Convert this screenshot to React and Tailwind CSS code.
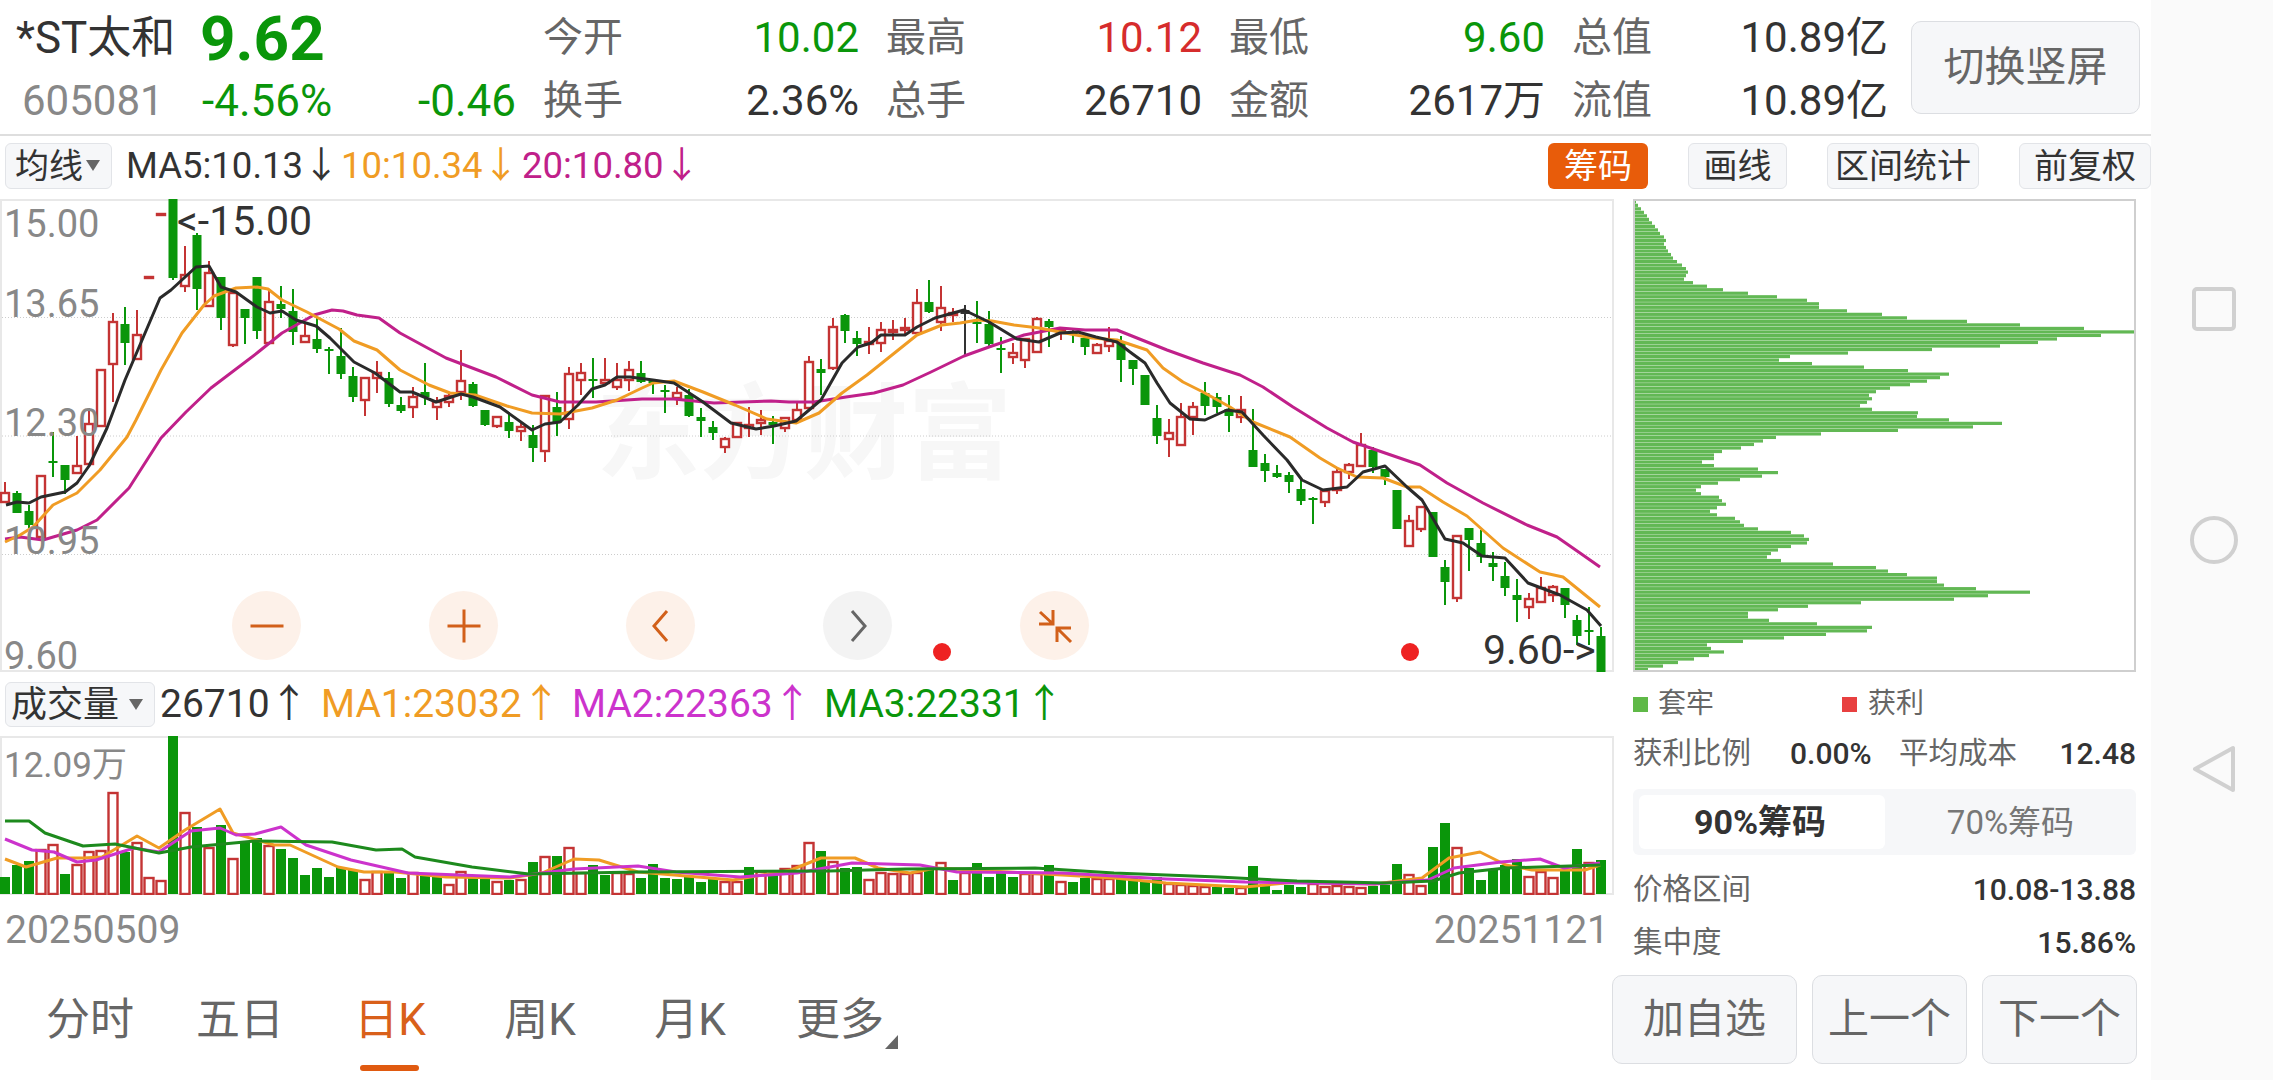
import React from 'react';

// [wick top, body top, body bottom, wick bottom, colour], 12px per candle, page y coords
const CANDLES = [
  [482,493,502,502,'r'],[491,493,513,513,'g'],[505,511,525,528,'g'],[476,476,537,537,'r'],[432,461,463,477,'g'],
  [465,465,480,494,'g'],[436,466,473,473,'r'],[408,424,464,464,'r'],[370,370,426,426,'r'],[313,322,364,402,'r'],
  [307,324,343,365,'g'],[310,335,359,359,'r'],[277,277,278,278,'r'],[214,214,215,215,'r'],[199,199,278,280,'g'],
  [246,275,286,292,'r'],[233,235,289,310,'g'],[261,273,306,306,'r'],[277,277,318,330,'g'],[290,293,345,347,'r'],
  [309,309,318,344,'g'],[277,277,331,339,'g'],[290,302,343,343,'r'],[286,304,309,318,'g'],[289,311,332,345,'g'],
  [323,336,342,342,'r'],[317,339,349,353,'g'],[347,349,350,374,'g'],[328,356,374,379,'g'],[367,376,397,402,'g'],
  [378,378,400,416,'r'],[361,373,378,393,'r'],[372,378,404,407,'g'],[397,405,411,413,'g'],[387,397,407,418,'r'],
  [363,392,397,405,'g'],[397,402,407,420,'r'],[393,396,402,407,'r'],[350,381,392,400,'r'],[382,384,406,407,'g'],
  [410,410,425,426,'g'],[417,417,426,428,'r'],[412,422,431,438,'g'],[423,427,431,441,'r'],[425,435,448,462,'g'],
  [396,396,451,462,'r'],[392,407,423,436,'g'],[367,374,419,429,'r'],[363,373,380,395,'r'],[358,379,380,398,'g'],
  [358,380,383,385,'r'],[363,380,387,390,'r'],[361,370,380,391,'r'],[361,373,382,383,'g'],[379,381,383,394,'g'],
  [385,390,392,413,'g'],[387,393,398,405,'r'],[389,395,416,417,'g'],[408,417,421,437,'g'],[421,427,433,440,'g'],
  [437,439,447,453,'r'],[422,423,437,437,'r'],[407,425,428,437,'r'],[410,420,423,435,'r'],[416,422,425,444,'g'],
  [418,418,428,432,'r'],[403,410,420,420,'r'],[356,362,408,408,'r'],[359,369,373,395,'g'],[318,327,368,370,'r'],
  [314,315,331,343,'g'],[331,338,344,356,'g'],[327,342,344,354,'r'],[322,330,343,352,'r'],[320,330,332,340,'r'],
  [318,328,330,336,'r'],[289,303,333,333,'r'],[280,302,312,313,'g'],[286,308,322,331,'r'],[308,313,315,322,'r'],
  [305,310,314,356,'k'],[301,322,324,343,'g'],[311,324,344,347,'g'],[337,348,350,373,'g'],[343,353,357,364,'r'],
  [338,339,360,368,'r'],[317,319,352,352,'r'],[319,321,327,347,'g'],[328,330,333,340,'r'],[330,332,334,343,'g'],
  [333,338,347,355,'g'],[343,345,353,354,'r'],[327,341,346,352,'r'],[336,342,360,382,'g'],[360,360,369,385,'g'],
  [375,375,405,405,'g'],[405,418,436,444,'g'],[419,433,439,457,'r'],[403,417,445,445,'r'],[402,407,417,435,'r'],
  [382,393,406,415,'g'],[393,397,407,413,'g'],[395,409,416,432,'g'],[396,410,417,423,'r'],[409,450,467,467,'g'],
  [454,463,471,482,'g'],[465,473,477,478,'g'],[472,475,482,493,'g'],[480,489,501,505,'g'],[497,498,500,524,'g'],
  [490,491,502,507,'r'],[467,472,490,494,'r'],[463,465,472,479,'r'],[433,445,466,466,'r'],[447,450,467,473,'g'],
  [469,469,477,485,'g'],[490,490,529,529,'g'],[515,521,546,546,'r'],[507,507,529,532,'r'],[512,512,557,557,'g'],
  [560,567,582,605,'g'],[536,536,598,602,'r'],[528,528,540,571,'g'],[530,543,557,563,'g'],[552,563,567,581,'g'],
  [562,576,588,596,'g'],[579,595,600,622,'g'],[593,599,607,619,'r'],[577,588,602,602,'r'],[585,587,595,602,'r'],
  [588,588,605,618,'g'],[615,620,636,645,'g'],[607,630,632,645,'g'],[627,636,672,672,'g'],
];

const MA5 = '6,505 17,502 29,503 41,497 65,492 77,483 89,466 100,443 107,428 125,380 160,298 171,290 196,267 209,266 221,287 236,292 257,307 270,313 282,311 296,320 316,326 330,338 354,362 375,373 400,392 412,392 436,402 461,394 473,397 500,407 532,430 545,424 560,422 578,405 592,389 605,385 617,377 630,377 653,380 674,383 703,402 731,423 756,429 774,426 796,421 821,400 842,363 858,347 871,343 881,335 905,335 917,327 935,318 964,310 989,322 1017,339 1039,342 1060,333 1078,332 1096,337 1117,342 1130,352 1145,363 1157,383 1170,403 1190,419 1205,420 1227,410 1242,412 1263,435 1287,460 1302,480 1323,490 1347,487 1363,472 1385,466 1407,487 1422,500 1445,539 1463,543 1482,556 1505,558 1528,583 1560,595 1587,610 1601,626';
const MA10 = '5,542 20,535 33,527 53,505 77,493 100,470 127,437 136,420 161,370 182,333 204,305 214,296 236,288 257,287 268,289 282,300 307,312 339,329 354,341 377,350 400,370 429,385 450,393 475,395 507,406 532,413 560,414 592,408 617,400 642,388 653,383 674,381 703,392 735,405 767,419 796,423 819,413 842,393 867,375 892,355 917,335 942,325 960,323 978,320 992,321 1014,325 1039,328 1060,332 1092,338 1117,340 1147,350 1163,368 1183,382 1203,392 1230,407 1253,422 1290,437 1320,458 1337,468 1357,477 1383,478 1407,487 1420,487 1443,502 1467,516 1503,548 1540,572 1563,577 1600,607';
const MA20 = '5,539 20,537 43,540 77,530 97,520 129,488 161,438 186,412 211,388 257,353 282,333 314,315 332,310 343,311 357,315 379,318 400,333 446,358 496,377 532,395 560,402 596,402 642,399 674,399 714,403 771,401 789,402 814,402 846,397 874,393 903,385 931,372 964,356 989,347 1024,335 1060,328 1085,330 1117,330 1167,350 1203,363 1240,375 1263,387 1293,407 1327,428 1353,442 1420,465 1447,483 1483,503 1527,525 1557,537 1580,553 1600,567';

// bar heights, then whether the bar is an up day
const VOLUME = [
  [17,'g'],[29,'g'],[33,'g'],[44,'r'],[49,'r'],[20,'g'],[29,'r'],[42,'r'],[43,'r'],[101,'r'],[42,'g'],[51,'r'],[16,'r'],[13,'r'],
  [158,'g'],[81,'r'],[67,'g'],[46,'r'],[69,'g'],[35,'r'],[52,'g'],[56,'g'],[48,'r'],[45,'g'],[36,'g'],[19,'g'],[26,'g'],[17,'g'],
  [27,'g'],[24,'g'],[14,'r'],[22,'r'],[22,'g'],[16,'g'],[21,'r'],[19,'g'],[17,'g'],[9,'r'],[22,'r'],[16,'g'],[15,'g'],[12,'r'],
  [14,'g'],[14,'r'],[32,'g'],[37,'r'],[38,'g'],[46,'r'],[21,'r'],[29,'g'],[19,'g'],[21,'r'],[20,'r'],[16,'g'],[30,'g'],[16,'g'],
  [15,'g'],[17,'g'],[12,'g'],[16,'g'],[12,'r'],[12,'r'],[27,'g'],[22,'r'],[19,'g'],[25,'r'],[28,'r'],[51,'r'],[43,'g'],[32,'r'],
  [26,'g'],[27,'g'],[14,'r'],[21,'r'],[20,'r'],[20,'r'],[21,'r'],[24,'g'],[31,'r'],[14,'g'],[21,'r'],[31,'g'],[17,'g'],[21,'g'],
  [17,'g'],[20,'r'],[20,'r'],[29,'g'],[12,'r'],[12,'g'],[16,'g'],[15,'r'],[15,'r'],[16,'g'],[17,'g'],[13,'g'],[17,'g'],[10,'r'],
  [9,'r'],[8,'r'],[7,'r'],[7,'g'],[6,'g'],[6,'r'],[28,'g'],[10,'g'],[4,'g'],[9,'g'],[7,'g'],[10,'r'],[7,'r'],[8,'r'],[7,'r'],
  [6,'r'],[8,'g'],[9,'g'],[30,'g'],[19,'r'],[8,'r'],[47,'g'],[71,'g'],[46,'r'],[26,'g'],[14,'g'],[25,'g'],[29,'g'],[35,'g'],
  [17,'r'],[22,'r'],[16,'r'],[24,'g'],[45,'g'],[31,'r'],[34,'g'],
];

const VOL_MA1 = '5,859 26,867 57,858 83,858 102,857 137,836 159,848 185,830 220,809 233,833 274,845 290,845 338,867 364,872 395,872 446,877 510,878 542,873 574,859 599,860 638,872 686,876 733,880 791,870 821,858 855,858 878,868 910,873 936,868 1009,872 1062,875 1114,878 1166,883 1245,887 1297,882 1375,884 1422,878 1449,858 1480,852 1506,865 1532,870 1585,870 1600,865';
const VOL_MA2 = '5,839 32,850 54,852 77,862 96,860 134,848 159,852 191,831 220,828 236,835 255,834 281,827 306,845 351,860 408,873 510,877 574,869 638,866 676,872 740,877 797,873 852,863 920,865 957,872 1062,873 1166,879 1245,882 1375,884 1428,880 1454,868 1501,862 1540,859 1564,868 1600,863';
const VOL_MA3 = '5,821 29,821 45,833 83,846 115,844 159,853 191,847 255,841 332,842 376,850 402,849 415,857 472,867 529,874 638,872 829,871 905,869 1035,868 1114,873 1218,877 1297,881 1386,883 1433,881 1459,873 1506,868 1600,865';

const CHIPS = [3,5,8,11,14,16,19,22,25,27,31,33,31,33,35,38,40,44,49,53,55,53,51,60,74,90,115,144,174,186,186,214,249,274,334,387,451,504,468,424,405,367,299,215,157,146,179,231,275,316,307,294,277,257,243,236,239,234,227,239,285,284,316,369,340,265,188,143,130,121,108,89,81,81,69,81,125,145,129,107,85,68,63,68,86,89,93,84,77,84,102,107,111,125,158,171,176,174,158,145,138,134,148,200,243,255,274,304,304,311,343,397,355,321,228,175,145,115,115,136,184,239,234,193,151,110,74,78,91,76,61,45,30,15];

const STATS = [
  [['今开', '10.02', 'text-[#0a960a]'], ['换手', '2.36%', 'text-[#333]']],
  [['最高', '10.12', 'text-[#d62c2c]'], ['总手', '26710', 'text-[#333]']],
  [['最低', '9.60', 'text-[#0a960a]'], ['金额', '2617万', 'text-[#333]']],
  [['总值', '10.89亿', 'text-[#333]'], ['流值', '10.89亿', 'text-[#333]']],
];

const candleX = (i) => 5 + 12 * i;

const Triangle = () => (
  <svg width="14" height="12" viewBox="0 0 14 12" className="shrink-0">
    <polygon points="0,0 14,0 7,11" fill="#666" />
  </svg>
);

const ToolButton = ({ children, className = '' }) => (
  <div className={`flex h-[46px] items-center justify-center rounded-md border border-[#e2e4e8] bg-[#f6f7f9] text-[34px] leading-none text-[#333] ${className}`}>
    {children}
  </div>
);

const RoundButton = ({ children, gray }) => (
  <div className={`flex h-[69px] w-[69px] items-center justify-center rounded-full ${gray ? 'bg-[#f3f3f3]' : 'bg-[#fdf1e9]'}`}>
    {children}
  </div>
);

const Icon = ({ children, stroke = '#d2601a' }) => (
  <svg width="40" height="40" viewBox="-20 -20 40 40" fill="none" stroke={stroke} strokeWidth="3">
    {children}
  </svg>
);

const KLineSvg = () => (
  <svg className="absolute left-0 top-0" width="1614" height="473" viewBox="0 199 1614 473">
    {[317.5, 436, 554.5].map((y) => (
      <line key={y} x1="2" x2="1612" y1={y} y2={y} stroke="#ccc" strokeWidth="1" strokeDasharray="1 2" />
    ))}
    {CANDLES.map(([hi, top, bot, lo, c], i) => {
      const x = candleX(i);
      const color = c === 'r' ? '#c43434' : c === 'k' ? '#333' : '#0a960a';
      return (
        <g key={i}>
          <line x1={x} x2={x} y1={hi} y2={lo} stroke={color} strokeWidth="2" />
          {c === 'r' ? (
            <rect x={x - 4} y={top} width="8" height={Math.max(bot - top, 1)} fill="#fff" stroke={color} strokeWidth="2.4" />
          ) : (
            <rect x={x - 4.5} y={top} width="9" height={Math.max(bot - top, 2)} fill={color} />
          )}
        </g>
      );
    })}
    <polyline points={MA20} fill="none" stroke="#c0208a" strokeWidth="3" strokeLinejoin="round" />
    <polyline points={MA10} fill="none" stroke="#f09c24" strokeWidth="3" strokeLinejoin="round" />
    <polyline points={MA5} fill="none" stroke="#2a2a2a" strokeWidth="3" strokeLinejoin="round" />
  </svg>
);

const VolumeSvg = () => (
  <svg className="absolute left-0 top-0" width="1614" height="159" viewBox="0 736 1614 159">
    {VOLUME.map(([h, c], i) => {
      const x = candleX(i);
      return c === 'r' ? (
        <rect key={i} x={x - 4.5} y={894 - h} width="9" height={h} fill="#fff" stroke="#c43434" strokeWidth="2.4" />
      ) : (
        <rect key={i} x={x - 5} y={894 - h} width="10" height={h} fill="#0a960a" />
      );
    })}
    <polyline points={VOL_MA1} fill="none" stroke="#f09c24" strokeWidth="3" strokeLinejoin="round" />
    <polyline points={VOL_MA2} fill="none" stroke="#cc33cc" strokeWidth="3" strokeLinejoin="round" />
    <polyline points={VOL_MA3} fill="none" stroke="#1d8a1d" strokeWidth="3" strokeLinejoin="round" />
  </svg>
);

const ChipSvg = () => (
  <svg className="absolute left-0 top-0" width="499" height="469" viewBox="0 0 499 469">
    {CHIPS.map((w, i) => (
      <rect key={i} x="-2" y={-0.8 + i * 3.517} width={w} height="3.2" fill="#62b854" />
    ))}
  </svg>
);

const Tab = ({ label, active, more }) => (
  <div className={`relative flex h-[110px] w-[150px] items-center justify-center text-[44px] leading-none ${active ? 'text-[#d9601a]' : 'text-[#666]'}`}>
    {label}
    {active && <div className="absolute left-[45px] top-[100px] h-[6px] w-[59px] rounded-full bg-[#e05a10]" />}
    {more && (
      <svg width="13" height="14" viewBox="0 0 13 14" className="absolute left-[120px] top-[70px]">
        <polygon points="13,0 13,14 0,14" fill="#666" />
      </svg>
    )}
  </div>
);

const Row = ({ label, value, className = '' }) => (
  <div className={`flex items-center justify-between text-[29.5px] leading-none ${className}`}>
    <span className="text-[#666]">{label}</span>
    <span className="text-[30px] font-medium text-[#333]">{value}</span>
  </div>
);

export default function App() {
  return (
    <div className="flex h-[1080px] w-[2273px] overflow-hidden bg-white [font-family:Roboto,'Noto_Sans_CJK_SC',sans-serif]">
      <div className="w-[2151px] shrink-0">
        {/* quote header */}
        <div className="flex h-[136px] border-b-2 border-[#dedede] text-[42px] leading-none">
          <div className="w-[543px] shrink-0 pt-[6px]">
            <div className="flex h-[63px] items-center">
              <span className="w-[200px] pl-[16px] text-[44px] text-[#333]">*ST太和</span>
              <span className="mt-[2px] text-[62px] font-bold text-[#0a960a]">9.62</span>
            </div>
            <div className="flex h-[63px] items-center">
              <span className="w-[202px] pl-[22px] text-[#888]">605081</span>
              <div className="flex w-[314px] justify-between text-[44px] text-[#0a960a]">
                <span>-4.56%</span>
                <span>-0.46</span>
              </div>
            </div>
          </div>
          {STATS.map((col, i) => (
            <div key={i} className="mr-[27px] w-[316px] shrink-0 pt-[6px]">
              {col.map(([label, value, color]) => (
                <div key={label} className="flex h-[63px] items-center justify-between">
                  <span className="text-[40px] text-[#666]">{label}</span>
                  <span className={color}>{value}</span>
                </div>
              ))}
            </div>
          ))}
          <div className="-ml-[4px] mt-[21px] flex h-[93px] w-[229px] items-center justify-center rounded-[10px] border border-[#dcdee2] bg-[#f6f7f9] text-[41px] text-[#666]">
            切换竖屏
          </div>
        </div>

        {/* MA toolbar */}
        <div className="flex h-[63px] items-start pt-[7px] text-[36.5px] leading-[46px]">
          <ToolButton className="ml-[5px] w-[107px] gap-[3px] pr-[2px]">
            均线
            <Triangle />
          </ToolButton>
          <span className="ml-[14px] w-[215px] text-[#333]">MA5:10.13↓</span>
          <span className="w-[181px] text-[#f09c24]">10:10.34↓</span>
          <span className="text-[#c0208a]">20:10.80↓</span>
          <div className="ml-auto flex gap-[40px]">
            <div className="flex h-[46px] w-[100px] items-center justify-center rounded-md bg-[#e85c0a] text-[34px] leading-none text-white">筹码</div>
            <ToolButton className="w-[99px]">画线</ToolButton>
            <ToolButton className="w-[152px]">区间统计</ToolButton>
            <ToolButton className="w-[132px]">前复权</ToolButton>
          </div>
        </div>

        <div className="flex">
          {/* charts */}
          <div className="w-[1612px] shrink-0">
            <div className="relative h-[473px] w-[1614px] shadow-[inset_0_0_0_2px_#e8e8e8]">
              <div className="absolute left-[596px] top-[185px] text-[104px] font-bold leading-none text-[#f7f7f7]">东方财富</div>
              <KLineSvg />
              {[['15.00', 'top-[6px]'], ['13.65', 'top-[86px]'], ['12.30', 'top-[205px]'], ['10.95', 'top-[323px]'], ['9.60', 'top-[438px]']].map(([t, pos]) => (
                <span key={t} className={`absolute left-[4px] text-[38px] leading-none text-[#888] ${pos}`}>{t}</span>
              ))}
              <span className="absolute left-[177px] top-[2px] text-[41px] leading-none text-[#333]">{'<-15.00'}</span>
              <span className="absolute left-[1483px] top-[431px] text-[41px] leading-none text-[#333]">{'9.60->'}</span>
              <div className="absolute left-[232px] top-[392px] flex gap-[128px]">
                <RoundButton>
                  <Icon><line x1="-16.5" x2="16.5" y1="0" y2="0" /></Icon>
                </RoundButton>
                <RoundButton>
                  <Icon><path d="M-16.5 0H16.5M0 -16.5V16.5" /></Icon>
                </RoundButton>
                <RoundButton>
                  <Icon><path d="M6 -15L-7 0L6 15" /></Icon>
                </RoundButton>
                <RoundButton gray>
                  <Icon stroke="#666"><path d="M-6 -15L7 0L-6 15" /></Icon>
                </RoundButton>
                <RoundButton>
                  <Icon><path d="M-15 -14L-2 -2M-2 -16V-2H-16M16 16L2 2M16 2H2V16" /></Icon>
                </RoundButton>
              </div>
              <div className="absolute left-[933px] top-[444px] h-[18px] w-[18px] rounded-full bg-[#ee2222]" />
              <div className="absolute left-[1401px] top-[444px] h-[18px] w-[18px] rounded-full bg-[#ee2222]" />
            </div>

            {/* volume toolbar */}
            <div className="flex h-[64px] items-start pt-[10px] text-[39px] leading-[45px]">
              <div className="ml-[5px] flex h-[45px] w-[150px] items-center gap-[10px] rounded-md border border-[#e2e4e8] bg-[#f6f7f9] pl-[5px] text-[36px] leading-none text-[#333]">
                成交量
                <Triangle />
              </div>
              <span className="ml-[5px] w-[161px] text-[#333]">26710↑</span>
              <span className="w-[251px] text-[#f09c24]">MA1:23032↑</span>
              <span className="w-[252px] text-[#cc33cc]">MA2:22363↑</span>
              <span className="text-[#0a960a]">MA3:22331↑</span>
            </div>

            <div className="relative h-[159px] w-[1614px] shadow-[inset_0_0_0_2px_#e8e8e8]">
              <VolumeSvg />
              <span className="absolute left-[4px] top-[12px] text-[35px] leading-none text-[#888]">12.09万</span>
            </div>

            <div className="flex h-[70px] w-[1609px] items-center justify-between pl-[5px] text-[39px] leading-none text-[#888]">
              <span>20250509</span>
              <span>20251121</span>
            </div>

            <div className="flex pl-[15px]">
              <Tab label="分时" />
              <Tab label="五日" />
              <Tab label="日K" active />
              <Tab label="周K" />
              <Tab label="月K" />
              <Tab label="更多" more />
            </div>
          </div>

          {/* chip distribution */}
          <div className="w-[539px]">
            <div className="ml-[21px] w-[503px]">
              <div className="relative h-[473px] border-2 border-[#cfcfcf]">
                <ChipSvg />
              </div>
              <div className="flex h-[64px] items-center text-[28px] leading-none text-[#666]">
                <div className="flex w-[209px] items-center gap-[10px]">
                  <div className="h-[15px] w-[15px] bg-[#5fb947]" />
                  套牢
                </div>
                <div className="flex items-center gap-[11px]">
                  <div className="h-[15px] w-[15px] bg-[#e84040]" />
                  获利
                </div>
              </div>
              <div className="flex h-[36px] items-center text-[29.5px] leading-none">
                <span className="text-[#666]">获利比例</span>
                <span className="ml-[39px] w-[81px] text-[30px] font-medium text-[#333]">0.00%</span>
                <span className="ml-[28px] text-[#666]">平均成本</span>
                <span className="ml-auto text-[30px] font-medium text-[#333]">12.48</span>
              </div>
              <div className="mt-[17px] flex h-[66px] items-center rounded-md bg-[#f6f7f9] pl-[6px] text-[33px] leading-none">
                <div className="flex h-[54px] w-[246px] items-center justify-center rounded-md bg-white pr-[4px] text-[34px] font-bold text-[#333]">90%筹码</div>
                <div className="flex flex-1 items-center justify-center text-[#777]">70%筹码</div>
              </div>
              <Row label="价格区间" value="10.08-13.88" className="h-[70px]" />
              <Row label="集中度" value="15.86%" className="h-[36px]" />
            </div>
            <div className="mt-[14px] flex h-[89px] gap-[15px] text-[41px] leading-none text-[#666]">
              <div className="flex w-[185px] items-center justify-center rounded-[10px] border border-[#dcdee2] bg-[#f6f7f9]">加自选</div>
              <div className="flex w-[155px] items-center justify-center rounded-[10px] border border-[#dcdee2] bg-[#f6f7f9]">上一个</div>
              <div className="flex w-[155px] items-center justify-center rounded-[10px] border border-[#dcdee2] bg-[#f6f7f9]">下一个</div>
            </div>
          </div>
        </div>
      </div>

      {/* system nav */}
      <div className="flex flex-1 flex-col items-center bg-[#fafafa] pl-[4px] pt-[287px]">
        <svg width="44" height="44" viewBox="0 0 44 44" fill="none" stroke="#d0d0d0" strokeWidth="4">
          <rect x="2" y="2" width="40" height="40" rx="3" />
        </svg>
        <svg className="mt-[185px]" width="48" height="48" viewBox="0 0 48 48" fill="none" stroke="#d0d0d0" strokeWidth="4">
          <circle cx="24" cy="24" r="22" />
        </svg>
        <svg className="mt-[181px]" width="44" height="48" viewBox="0 0 44 48" fill="none" stroke="#d0d0d0" strokeWidth="4" strokeLinejoin="round">
          <polygon points="41,3 41,45 3,24" />
        </svg>
      </div>
    </div>
  );
}
